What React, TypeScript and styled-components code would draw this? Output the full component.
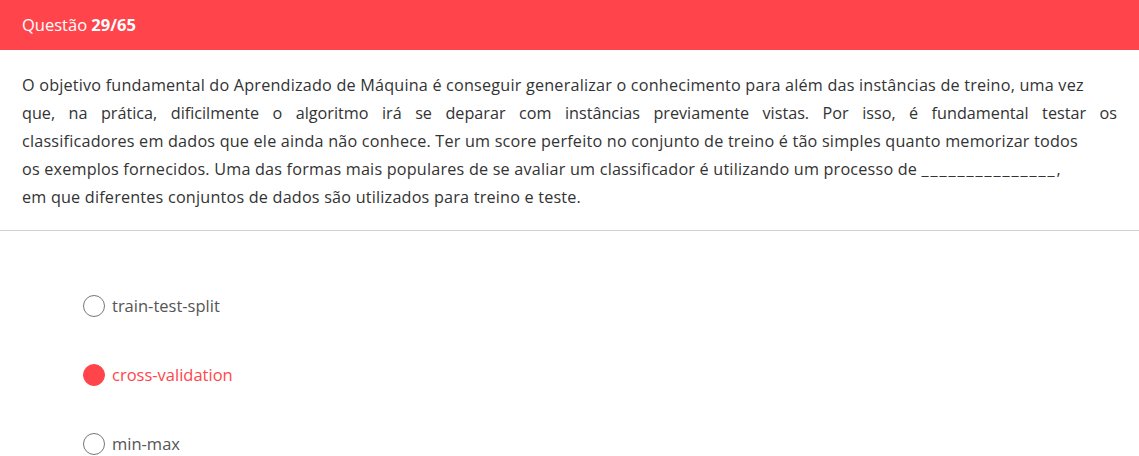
import React from "react";
import styled, { createGlobalStyle } from "styled-components";

const Global = createGlobalStyle`
  html, body { margin: 0; padding: 0; background: #fff; }
  body { font-family: "Open Sans", "Noto Sans", sans-serif; }
`;

const Page = styled.div`
  width: 1139px;
  display: flex;
  flex-direction: column;
`;

const Header = styled.header`
  height: 50px;
  background: #ff454b;
  color: #fff;
  display: flex;
  align-items: center;
  padding: 0 22px 2px;
  box-sizing: border-box;
  font-size: 16.5px;
  b { font-weight: 700; }
`;

const Statement = styled.div`
  padding: 21px 22px 19px 22px;
  font-size: 16.2px;
  line-height: 28px;
  letter-spacing: 0.2px;
  color: #333;
  border-bottom: 1px solid #d0d0d0;
`;

const Line = styled.span<{ $justify?: boolean }>`
  display: block;
  text-align: ${(p) => (p.$justify ? "justify" : "left")};
  text-align-last: ${(p) => (p.$justify ? "justify" : "left")};
  white-space: ${(p) => (p.$justify ? "normal" : "nowrap")};
  letter-spacing: ${(p) => (p.$justify ? "0" : "inherit")};
`;

const Blank = styled.span`
  letter-spacing: 1.9px;
`;

const Options = styled.div`
  display: flex;
  flex-direction: column;
  gap: 46px;
  padding: 63px 0 0 83px;
`;

const Option = styled.label<{ $selected?: boolean }>`
  display: flex;
  align-items: center;
  gap: 7px;
  height: 23px;
  font-size: 16.5px;
  color: ${(p) => (p.$selected ? "#ff454b" : "#555")};
  cursor: pointer;
`;

const Radio = styled.span<{ $selected?: boolean }>`
  width: 22px;
  height: 22px;
  box-sizing: border-box;
  border-radius: 50%;
  border: 1px solid ${(p) => (p.$selected ? "#ff454b" : "#777")};
  background: ${(p) => (p.$selected ? "#ff454b" : "#fff")};
  flex-shrink: 0;
`;

const options = [
  { label: "train-test-split", selected: false },
  { label: "cross-validation", selected: true },
  { label: "min-max", selected: false },
];

export default function App() {
  return (
    <Page>
      <Global />
      <Header>
        <span>
          Questão <b>29/65</b>
        </span>
      </Header>
      <Statement>
        <Line>
          O objetivo fundamental do Aprendizado de Máquina é conseguir generalizar o conhecimento para além das
          instâncias de treino, uma vez
        </Line>
        <Line $justify>
          que, na prática, dificilmente o algoritmo irá se deparar com instâncias previamente vistas. Por isso, é
          fundamental testar os
        </Line>
        <Line>
          classificadores em dados que ele ainda não conhece. Ter um score perfeito no conjunto de treino é tão
          simples quanto memorizar todos
        </Line>
        <Line>
          os exemplos fornecidos. Uma das formas mais populares de se avaliar um classificador é utilizando um
          processo de <Blank>_______________</Blank>,
        </Line>
        <Line>em que diferentes conjuntos de dados são utilizados para treino e teste.</Line>
      </Statement>
      <Options>
        {options.map((o) => (
          <Option key={o.label} $selected={o.selected}>
            <Radio $selected={o.selected} />
            {o.label}
          </Option>
        ))}
      </Options>
    </Page>
  );
}
